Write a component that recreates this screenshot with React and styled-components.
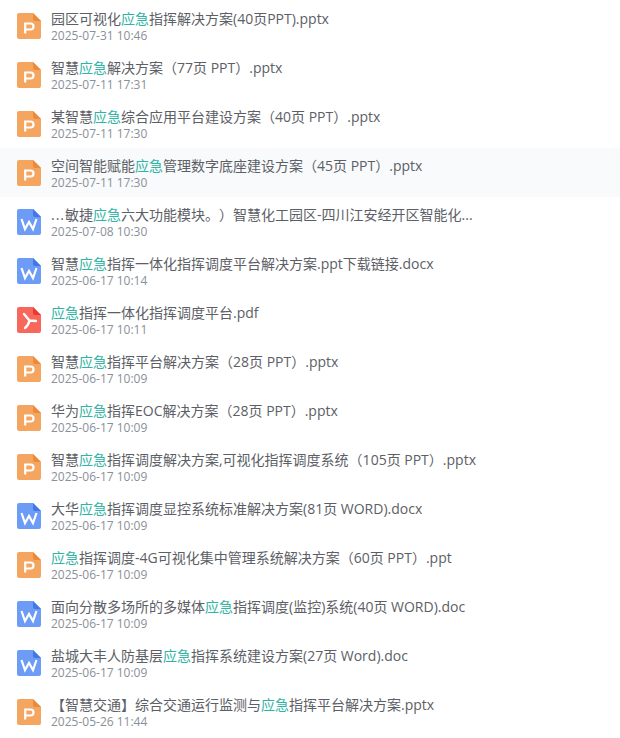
import React from 'react';
import styled, { createGlobalStyle } from 'styled-components';

const files = [
  { type: 'ppt', before: '园区可视化', after: '指挥解决方案(40页PPT).pptx', date: '2025-07-31 10:46' },
  { type: 'ppt', before: '智慧', after: '解决方案（77页 PPT）.pptx', date: '2025-07-11 17:31' },
  { type: 'ppt', before: '某智慧', after: '综合应用平台建设方案（40页 PPT）.pptx', date: '2025-07-11 17:30' },
  { type: 'ppt', before: '空间智能赋能', after: '管理数字底座建设方案（45页 PPT）.pptx', date: '2025-07-11 17:30', active: true },
  { type: 'word', lead: '...', before: '敏捷', after: '六大功能模块。）智慧化工园区-四川江安经开区智能化...', date: '2025-07-08 10:30' },
  { type: 'word', before: '智慧', after: '指挥一体化指挥调度平台解决方案.ppt下载链接.docx', date: '2025-06-17 10:14' },
  { type: 'pdf', before: '', after: '指挥一体化指挥调度平台.pdf', date: '2025-06-17 10:11' },
  { type: 'ppt', before: '智慧', after: '指挥平台解决方案（28页 PPT）.pptx', date: '2025-06-17 10:09' },
  { type: 'ppt', before: '华为', after: '指挥EOC解决方案（28页 PPT）.pptx', date: '2025-06-17 10:09' },
  { type: 'ppt', before: '智慧', after: '指挥调度解决方案,可视化指挥调度系统（105页 PPT）.pptx', date: '2025-06-17 10:09' },
  { type: 'word', before: '大华', after: '指挥调度显控系统标准解决方案(81页 WORD).docx', date: '2025-06-17 10:09' },
  { type: 'ppt', before: '', after: '指挥调度-4G可视化集中管理系统解决方案（60页 PPT）.ppt', date: '2025-06-17 10:09' },
  { type: 'word', before: '面向分散多场所的多媒体', after: '指挥调度(监控)系统(40页 WORD).doc', date: '2025-06-17 10:09' },
  { type: 'word', before: '盐城大丰人防基层', after: '指挥系统建设方案(27页 Word).doc', date: '2025-06-17 10:09' },
  { type: 'ppt', before: '【智慧交通】综合交通运行监测与', after: '指挥平台解决方案.pptx', date: '2025-05-26 11:44' },
];

const iconColors = {
  ppt: ['#f4a55f', '#ec8a3c'],
  word: ['#6c9cf6', '#3f78e8'],
  pdf: ['#f8675c', '#e83a30'],
};

const FileIcon = ({ type }) => {
  const [body, fold] = iconColors[type];
  return (
    <IconSvg viewBox="0 0 24 26" aria-hidden="true">
      <path d="M2 0H16L24 8V24a2 2 0 0 1-2 2H2a2 2 0 0 1-2-2V2a2 2 0 0 1 2-2Z" fill={body} />
      <path d="M16 0L24 8H18a2 2 0 0 1-2-2Z" fill={fold} />
      {type === 'ppt' && (
        <path d="M8.2 20.5V10.5H13.5a3 3 0 0 1 0 6H8.2" fill="none" stroke="#fff" strokeWidth="2.2" />
      )}
      {type === 'word' && (
        <path d="M4.5 10L8 20L12 13L16 20L19.5 10" fill="none" stroke="#fff" strokeWidth="2.2" />
      )}
      {type === 'pdf' && (
        <path d="M7 7L12.5 13.5M12.5 13.5L19 14M12.5 13.5C12 16 10.5 19 8 21" fill="none" stroke="#fff" strokeWidth="2.4" strokeLinecap="round" />
      )}
    </IconSvg>
  );
};

export default function App() {
  return (
    <>
      <GlobalStyle />
      <List>
        {files.map((file, i) => (
          <Row key={i} $active={file.active}>
            <FileIcon type={file.type} />
            <Info>
              <Title>
                {file.lead && <Dots>{file.lead}</Dots>}
                {file.before}
                <Keyword>应急</Keyword>
                {file.after}
              </Title>
              <DateText>{file.date}</DateText>
            </Info>
          </Row>
        ))}
      </List>
    </>
  );
}

const GlobalStyle = createGlobalStyle`
  html, body {
    margin: 0;
    padding: 0;
    background: #fff;
  }
  body {
    font-family: "Open Sans", "Noto Sans CJK SC", sans-serif;
  }
`;

const List = styled.div`
  padding-top: 1px;
  width: 620px;
`;

const Row = styled.div`
  display: flex;
  align-items: center;
  gap: 10px;
  height: 49px;
  padding-left: 17px;
  box-sizing: border-box;
  background: ${(props) => (props.$active ? '#f8fafc' : 'transparent')};
`;

const IconSvg = styled.svg`
  width: 24px;
  height: 26px;
  flex-shrink: 0;
  margin-top: 1px;
`;

const Info = styled.div`
  display: flex;
  flex-direction: column;
  min-width: 0;
  margin-top: 2px;
`;

const Title = styled.div`
  font-size: 14px;
  line-height: 18px;
  color: #5c6066;
  white-space: nowrap;
  text-spacing-trim: space-all;
`;

const Dots = styled.span`
  letter-spacing: 1px;
`;

const Keyword = styled.span`
  color: #2fb5a5;
`;

const DateText = styled.div`
  font-size: 12px;
  line-height: 15px;
  color: #8a9099;
`;
